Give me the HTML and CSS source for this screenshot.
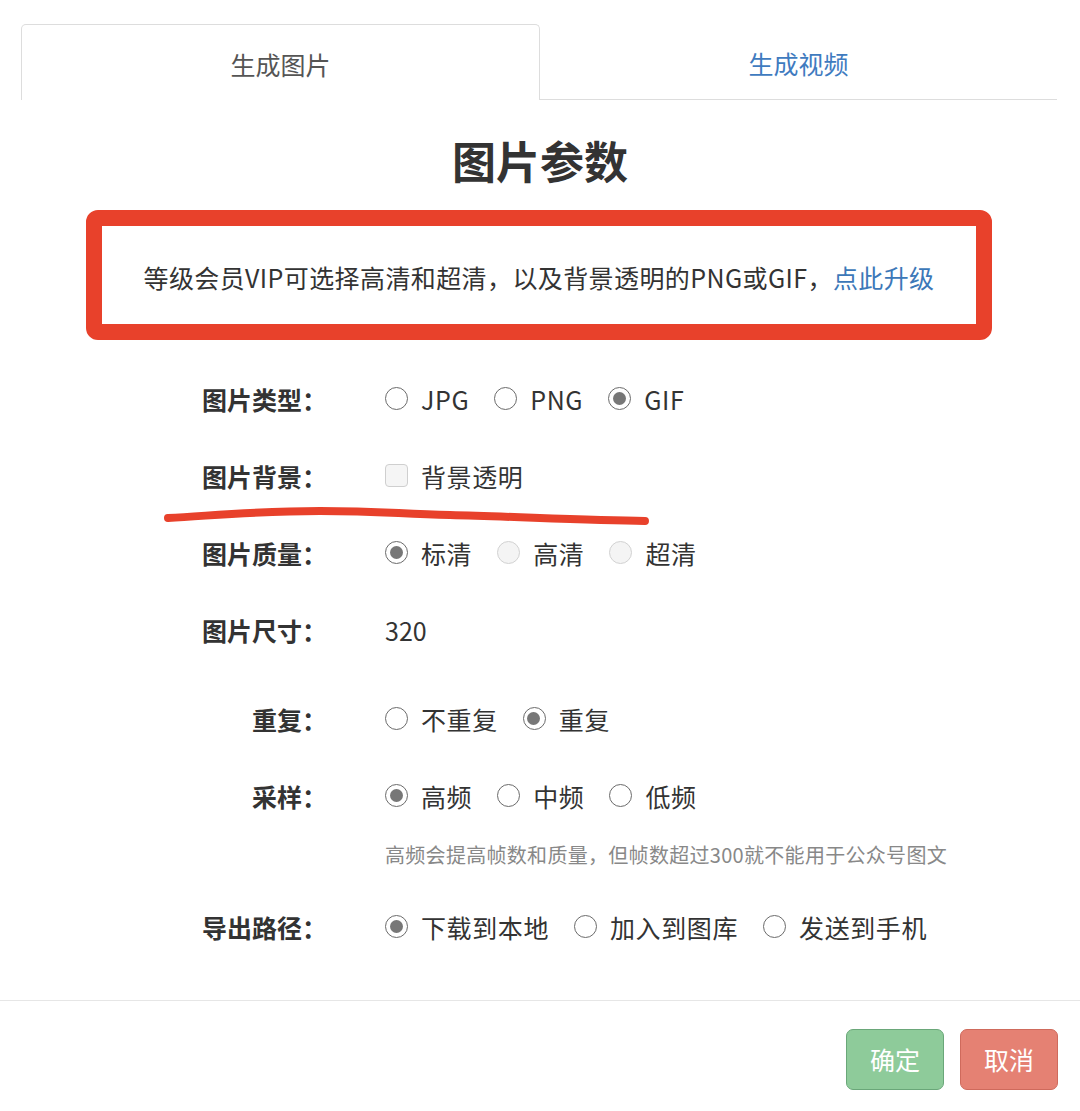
FILE: index.html
```html
<!DOCTYPE html>
<html lang="zh-CN">
<head>
<meta charset="utf-8">
<title>图片参数</title>
<link rel="stylesheet" href="styles.css">
</head>
<body>
<div class="page">
  <div class="tabs">
    <div class="tab active">生成图片</div>
    <div class="tab">生成视频</div>
  </div>

  <h1 class="title">图片参数</h1>

  <div class="notice">
    <p>等级会员VIP可选择高清和超清，以及背景透明的PNG或GIF，<a class="link">点此升级</a></p>
  </div>

  <div class="form">
    <div class="row">
      <div class="label">图片类型：</div>
      <div class="opts">
        <span class="opt"><span class="radio"></span>JPG</span>
        <span class="opt"><span class="radio"></span>PNG</span>
        <span class="opt"><span class="radio checked"></span>GIF</span>
      </div>
    </div>
    <div class="row">
      <div class="label">图片背景：</div>
      <div class="opts">
        <span class="opt"><span class="checkbox"></span>背景透明</span>
      </div>
    </div>
    <div class="row">
      <div class="label">图片质量：</div>
      <div class="opts">
        <span class="opt"><span class="radio checked"></span>标清</span>
        <span class="opt"><span class="radio disabled"></span>高清</span>
        <span class="opt"><span class="radio disabled"></span>超清</span>
      </div>
    </div>
    <div class="row">
      <div class="label">图片尺寸：</div>
      <div class="opts">
        <span class="value">320</span>
      </div>
    </div>
    <div class="row row-gap">
      <div class="label">重复：</div>
      <div class="opts">
        <span class="opt"><span class="radio"></span>不重复</span>
        <span class="opt"><span class="radio checked"></span>重复</span>
      </div>
    </div>
    <div class="row">
      <div class="label">采样：</div>
      <div class="opts">
        <span class="opt"><span class="radio checked"></span>高频</span>
        <span class="opt"><span class="radio"></span>中频</span>
        <span class="opt"><span class="radio"></span>低频</span>
      </div>
    </div>
    <div class="hint">高频会提高帧数和质量，但帧数超过300就不能用于公众号图文</div>
    <div class="row">
      <div class="label">导出路径：</div>
      <div class="opts">
        <span class="opt"><span class="radio checked"></span>下载到本地</span>
        <span class="opt"><span class="radio"></span>加入到图库</span>
        <span class="opt"><span class="radio"></span>发送到手机</span>
      </div>
    </div>
  </div>

  <div class="footer">
    <button class="btn btn-ok">确定</button>
    <button class="btn btn-cancel">取消</button>
  </div>

  <svg class="scribble" width="1080" height="1111" viewBox="0 0 1080 1111" aria-hidden="true">
    <path d="M168 518 C 220 515, 260 511, 320 511 C 380 511, 400 514, 450 515 C 520 517, 590 520, 645 521" fill="none" stroke="#e8412b" stroke-width="8" stroke-linecap="round"/>
  </svg>
</div>
</body>
</html>
```

FILE: styles.css
```css
* {
  box-sizing: border-box;
}

html, body {
  margin: 0;
  padding: 0;
  background: #ffffff;
}

body {
  font-family: "Noto Sans CJK SC", "Noto Sans", sans-serif;
  color: #333333;
}

.page {
  position: relative;
  width: 1080px;
  height: 1111px;
  overflow: hidden;
  padding-top: 24px;
}

.tabs {
  display: flex;
  margin: 0 23px 0 21px;
  height: 76px;
}

.tab {
  flex: 1;
  display: flex;
  align-items: center;
  justify-content: center;
  padding-top: 2px;
  font-size: 25px;
  color: #3f7bbf;
  border-bottom: 1px solid #dddddd;
}

.tab.active {
  color: #555555;
  border: 1px solid #dddddd;
  border-bottom: none;
  border-radius: 5px 5px 0 0;
}

.title {
  margin: 30px 0 0;
  height: 60px;
  line-height: 60px;
  text-align: center;
  font-size: 44px;
  font-weight: 700;
  color: #333333;
}

.notice {
  margin: 20px 88px 0 86px;
  height: 130px;
  border: 16px solid #e8412b;
  border-radius: 12px;
  display: flex;
  align-items: center;
  justify-content: center;
}

.notice p {
  margin: 0;
  padding-top: 4px;
  font-size: 25px;
  line-height: 34px;
  color: #333333;
  letter-spacing: 0.4px;
}

.link {
  color: #3c78b8;
}

.form {
  margin-top: 20px;
}

.row {
  display: flex;
  align-items: center;
  height: 77px;
}

.row-gap {
  margin-top: 12px;
}

.label {
  width: 327px;
  text-align: right;
  font-size: 25px;
  font-weight: 700;
  line-height: 34px;
  color: #333333;
}

.opts {
  margin-left: 58px;
  display: flex;
  align-items: center;
  font-size: 25px;
  line-height: 34px;
  color: #333333;
  letter-spacing: 0.6px;
}

.value {
  font-size: 25px;
  letter-spacing: 0;
}

.opt {
  display: flex;
  align-items: center;
  margin-right: 25px;
}

.radio {
  width: 23px;
  height: 23px;
  border: 1.5px solid #6b6b6b;
  border-radius: 50%;
  background: #ffffff;
  margin-right: 13px;
  flex: none;
  position: relative;
}

.radio.checked::after {
  content: "";
  position: absolute;
  left: 3.5px;
  top: 3.5px;
  width: 13px;
  height: 13px;
  border-radius: 50%;
  background: #777777;
}

.radio.disabled {
  border-color: #d2d2d2;
  background: #f4f4f4;
}

.checkbox {
  width: 23px;
  height: 23px;
  border: 1.5px solid #cfcfcf;
  border-radius: 4px;
  background: #f5f5f5;
  margin-right: 13px;
  flex: none;
}

.hint {
  margin-left: 385px;
  padding-top: 6px;
  height: 54px;
  font-size: 20px;
  line-height: 30px;
  color: #888888;
  letter-spacing: 0.3px;
}

.footer {
  margin-top: 35px;
  border-top: 1px solid #e6e6e6;
  padding: 28px 22px 0 0;
  display: flex;
  justify-content: flex-end;
  gap: 16px;
}

.btn {
  width: 98px;
  height: 61px;
  border-radius: 7px;
  font-family: "Noto Sans CJK SC", sans-serif;
  font-size: 25px;
  color: #ffffff;
  padding: 0 0 2px;
  cursor: pointer;
}

.btn-ok {
  background: #8ecb9a;
  border: 1.5px solid #6aa779;
}

.btn-cancel {
  background: #e58173;
  border: 1.5px solid #cf6a5c;
}

.scribble {
  position: absolute;
  left: 0;
  top: 0;
  pointer-events: none;
}
```
